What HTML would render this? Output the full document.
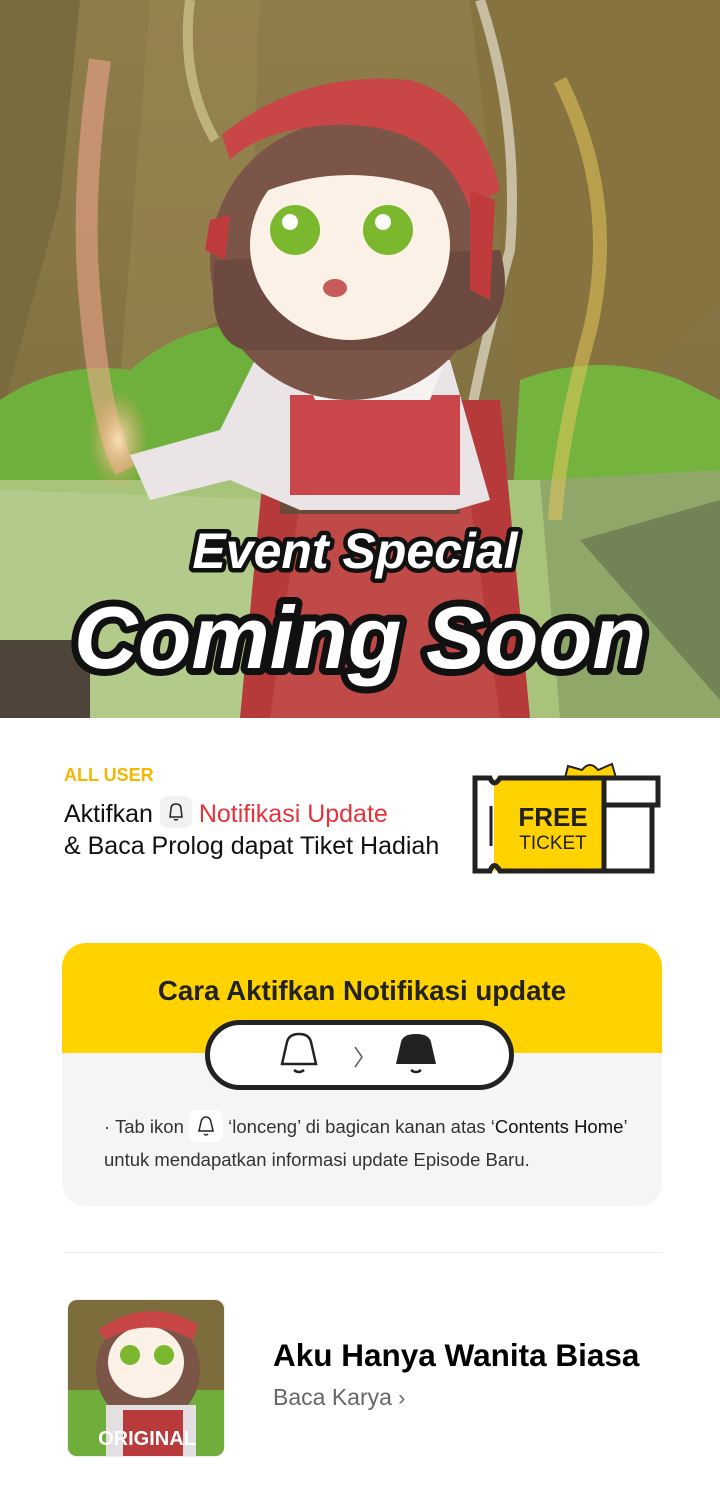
<!DOCTYPE html>
<html><head><meta charset="utf-8"><style>
*{margin:0;padding:0;box-sizing:border-box}
body{width:720px;height:1500px;background:#fff;font-family:"Liberation Sans",Arial,sans-serif;position:relative;overflow:hidden}
.abs{position:absolute}
.hero{left:0;top:0;width:720px;height:718px;overflow:hidden}
.t{font-family:"Liberation Sans",sans-serif;font-weight:bold;font-style:italic;fill:#fff;stroke:#111;stroke-width:10;paint-order:stroke;stroke-linejoin:round}
</style></head><body>
<div class="abs hero">
<svg width="720" height="718" viewBox="0 0 720 718">
<defs>
<radialGradient id="glowR" cx=".5" cy=".5" r=".5"><stop offset="0" stop-color="#ffe6c0" stop-opacity=".9"/><stop offset="1" stop-color="#ff9a70" stop-opacity="0"/></radialGradient>
<linearGradient id="bg" x1="0" y1="0" x2="0" y2="1"><stop offset="0" stop-color="#8f7d4c"/><stop offset="1" stop-color="#7b6a3a"/></linearGradient>
</defs>
<rect width="720" height="718" fill="url(#bg)"/>
<path d="M0 0 L80 0 L60 200 L0 420Z" fill="#7a6b3e"/>
<path d="M470 0 L720 0 L720 300 L600 420 L520 420Z" fill="#86733f"/>
<path d="M150 0 L260 0 L250 300 L120 380Z" fill="#978552" opacity=".6"/>
<path d="M0 400 Q60 360 130 370 Q200 310 280 330 L290 560 L0 560Z" fill="#6fb03c"/>
<path d="M520 380 Q600 350 680 380 L720 400 L720 540 L510 540Z" fill="#74b43e"/>
<rect x="0" y="480" width="720" height="238" fill="#a8c47a"/>
<path d="M0 490 L290 500 L270 718 L0 718Z" fill="#b3cb8a"/>
<path d="M540 480 L720 470 L720 718 L560 718Z" fill="#8fa86a"/>
<path d="M580 540 L720 500 L720 700 Z" fill="#556040" opacity=".5"/>
<rect x="0" y="640" width="90" height="78" fill="#4e443a"/>
<path d="M100 60 Q80 200 90 300 Q100 420 125 470" stroke="#f6a890" stroke-width="22" fill="none" opacity=".55"/>
<ellipse cx="118" cy="440" rx="30" ry="50" fill="url(#glowR)"/>
<path d="M560 80 Q620 200 590 330 Q560 440 555 520" stroke="#e3c55a" stroke-width="14" fill="none" opacity=".55"/>
<path d="M480 0 Q520 120 510 250 Q480 360 470 420" stroke="#f4f0e4" stroke-width="10" fill="none" opacity=".6"/>
<path d="M190 0 Q180 80 215 140" stroke="#e8e6a8" stroke-width="10" fill="none" opacity=".5"/>
<path d="M270 400 L500 400 L530 718 L240 718Z" fill="#b73a3a"/>
<path d="M300 500 L470 500 L500 718 L270 718Z" fill="#c04a48"/>
<rect x="280" y="490" width="180" height="24" fill="#6a4a3a"/>
<path d="M255 360 L450 360 L490 500 L455 510 L300 510 L230 480 L150 500 L130 455 L220 430Z" fill="#eae4e6"/>
<rect x="290" y="395" width="170" height="100" fill="#c9474a"/>
<path d="M300 360 L445 360 L430 400 L315 400Z" fill="#f5f2f2"/>
<ellipse cx="350" cy="260" rx="140" ry="140" fill="#7a5548"/>
<path d="M215 260 Q205 340 245 350 L460 350 Q520 320 500 250Z" fill="#6c4a40"/>
<ellipse cx="350" cy="245" rx="100" ry="95" fill="#fbf1e6"/>
<path d="M245 175 Q350 110 455 175 L455 200 Q350 150 245 200Z" fill="#7a5548"/>
<circle cx="295" cy="230" r="25" fill="#7cb82e"/><circle cx="388" cy="230" r="25" fill="#7cb82e"/>
<circle cx="290" cy="222" r="8" fill="#fff"/><circle cx="383" cy="222" r="8" fill="#fff"/>
<ellipse cx="335" cy="288" rx="12" ry="9" fill="#c85a5a"/>
<path d="M222 135 Q300 70 410 80 Q480 100 500 190 L470 210 Q440 120 330 125 Q260 130 230 160Z" fill="#c94646"/>
<path d="M470 190 L495 200 L490 300 L470 290Z" fill="#c03c3c"/>
<path d="M210 220 L230 215 L225 260 L205 250Z" fill="#c03c3c"/>
<text x="355" y="568" text-anchor="middle" class="t" font-size="50" style="stroke-width:9">Event Special</text>
<text x="360" y="668" text-anchor="middle" class="t" font-size="88" style="stroke-width:14">Coming Soon</text>
</svg>
</div>

<div class="abs" style="left:64px;top:765px;font-size:18px;font-weight:bold;color:#f5b800">ALL USER</div>
<div class="abs" style="left:64px;top:799px;font-size:25px;color:#111;line-height:31px;white-space:nowrap">Aktifkan <span style="display:inline-block;width:32px;height:32px;background:#f1f1f1;border-radius:8px;vertical-align:middle;position:relative;top:-3px;text-align:center"><svg width="20" height="22" viewBox="0 0 20 22" style="margin-top:5px"><path d="M4 16 L5 8 Q5 3 10 3 Q15 3 15 8 L16 16Z" fill="none" stroke="#222" stroke-width="1.5"/><path d="M8 18 Q10 20 12 18" fill="none" stroke="#222" stroke-width="1.5"/></svg></span> <span style="color:#e8323a">Notifikasi Update</span><br>&amp; Baca Prolog dapat Tiket Hadiah</div>

<svg class="abs" style="left:470px;top:760px" width="195" height="116" viewBox="0 0 195 116">
<path d="M95 18 L98 6 L112 10 Q120 0 128 10 L142 4 L146 18Z" fill="#ffd200" stroke="#222" stroke-width="2"/>
<rect x="5" y="18" width="183" height="93" fill="#fff"/>
<rect x="24" y="19" width="110" height="92" fill="#ffd200"/>
<path d="M5 18 H20 Q24 28 30 18 H188 V45 H182 V111 H30 Q24 100 20 111 H5Z" fill="none" stroke="#222" stroke-width="5"/>
<line x1="134" y1="18" x2="134" y2="111" stroke="#222" stroke-width="5"/>
<line x1="134" y1="45" x2="182" y2="45" stroke="#222" stroke-width="5"/>
<line x1="21" y1="46" x2="21" y2="86" stroke="#222" stroke-width="3"/>
<text x="83" y="66" text-anchor="middle" font-family="Liberation Sans" font-weight="bold" font-size="26" fill="#222">FREE</text>
<text x="83" y="89" text-anchor="middle" font-family="Liberation Sans" font-size="19" fill="#222">TICKET</text>
</svg>

<div class="abs" style="left:62px;top:943px;width:600px;height:263px;border-radius:24px;background:#f5f5f3;overflow:hidden">
<div style="height:110px;background:#ffd200"></div>
</div>
<div class="abs" style="left:62px;top:975px;width:600px;text-align:center;font-size:27.7px;font-weight:bold;color:#222">Cara Aktifkan Notifikasi update</div>
<div class="abs" style="left:205px;top:1020px;width:309px;height:70px;border:5px solid #222;border-radius:35px;background:#fff"></div>
<svg class="abs" style="left:275px;top:1030px" width="170" height="52" viewBox="0 0 170 52">
<path d="M7 34 L12 12 Q14 4 24 4 Q34 4 36 12 L41 34Z" fill="none" stroke="#222" stroke-width="2.5"/>
<path d="M19 40 Q24 44 29 40" fill="none" stroke="#222" stroke-width="2.5"/>
<path d="M80 17 L87 27 L80 37" fill="none" stroke="#555" stroke-width="1.5"/>
<path d="M121 34 L126 12 Q128 4 141 4 Q154 4 156 12 L161 34Z" fill="#222"/>
<path d="M136 40 Q141 44 146 40" fill="none" stroke="#222" stroke-width="2.5"/>
</svg>
<div class="abs" style="left:104px;top:1111px;width:580px;font-size:18.5px;color:#333;line-height:32px;white-space:nowrap">· Tab ikon <span style="display:inline-block;width:34px;height:32px;background:#fff;border-radius:8px;vertical-align:middle;text-align:center;position:relative;top:-2px"><svg width="20" height="24" viewBox="0 0 20 24" style="margin-top:4px"><path d="M3 17 L5 8 Q6 3 10 3 Q14 3 15 8 L17 17Z" fill="none" stroke="#222" stroke-width="1.5"/><path d="M8 20 Q10 22 12 20" fill="none" stroke="#222" stroke-width="1.5"/></svg></span> ‘lonceng’ di bagican kanan atas ‘<span style="color:#111">Contents Home</span>’<br>untuk mendapatkan informasi update Episode Baru.</div>

<div class="abs" style="left:64px;top:1252px;width:598px;height:1px;background:#eee"></div>

<div class="abs" style="left:67px;top:1299px;width:158px;height:158px;border-radius:10px;overflow:hidden;border:1px solid #eee">
<svg width="158" height="158" viewBox="0 0 158 158">
<rect width="158" height="158" fill="#7d6d3c"/>
<rect x="0" y="90" width="158" height="68" fill="#6fae3a"/>
<ellipse cx="80" cy="70" rx="52" ry="55" fill="#7a5548"/>
<ellipse cx="78" cy="62" rx="38" ry="36" fill="#fbf1e6"/>
<path d="M30 30 Q80 -5 130 25 L125 40 Q80 15 38 40Z" fill="#c94646"/>
<circle cx="62" cy="55" r="10" fill="#7cb82e"/><circle cx="96" cy="55" r="10" fill="#7cb82e"/>
<rect x="38" y="105" width="90" height="53" fill="#e4dfe0"/>
<rect x="55" y="110" width="60" height="48" fill="#b83a3a"/>
<text x="79" y="145" text-anchor="middle" font-family="Liberation Sans" font-weight="bold" font-size="20" fill="#fff">ORIGINAL</text>
</svg>
</div>
<div class="abs" style="left:273px;top:1337px;font-size:31.5px;font-weight:bold;color:#000;white-space:nowrap">Aku Hanya Wanita Biasa</div>
<div class="abs" style="left:273px;top:1384px;font-size:23px;color:#666">Baca Karya <span style="font-size:21px">›</span></div>
</body></html>
